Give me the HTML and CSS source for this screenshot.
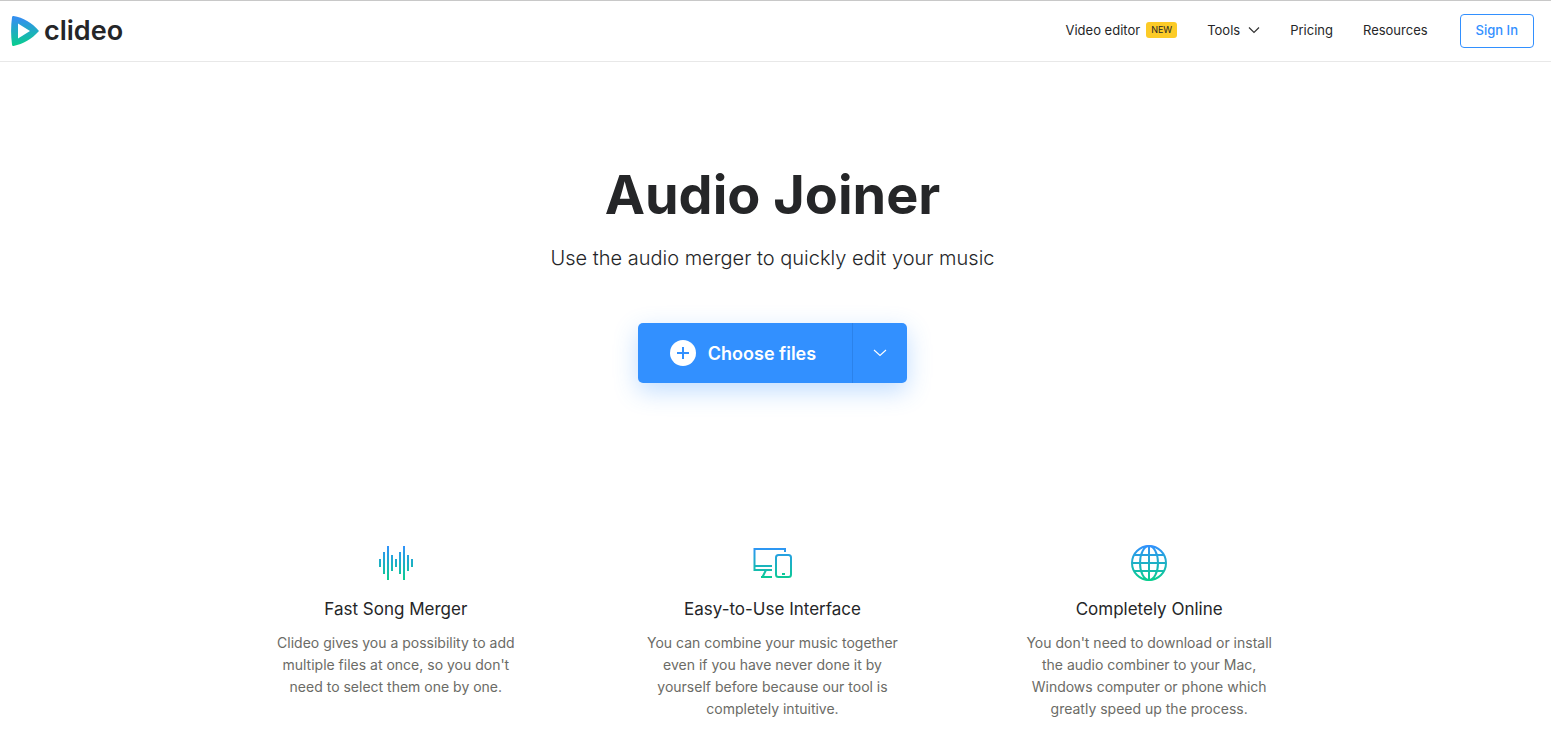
FILE: index.html
```html
<!DOCTYPE html>
<html lang="en">
<head>
  <meta charset="UTF-8" />
  <title>Audio Joiner | Clideo</title>
  <meta name="viewport" content="width=device-width, initial-scale=1.0" />
  <link rel="stylesheet" href="styles.css">
</head>
<body>

  <header class="header">
    <a href="#" class="logo">
      <svg width="30" height="32" viewBox="0 0 30 32" aria-hidden="true">
        <defs>
          <linearGradient id="logo-fill" x1="0" y1="0" x2="0" y2="1">
            <stop offset="0.1" stop-color="#3390ee" />
            <stop offset="1" stop-color="#08cf8c" />
          </linearGradient>
        </defs>
        <path fill="url(#logo-fill)" fill-rule="evenodd" d="M3.6 1C13 2.500 22 7.500 29 16C22 24 13 29 3.600 31C2.600 31 2.200 30.500 2 29.500C.8 20 .8 11 2 2.500C2.200 1.400 2.600 1 3.600 1ZM8 8.500V23.500L20 16Z" />
      </svg>
      <span>clideo</span>
    </a>

    <nav class="nav">
      <a href="#" class="nav-link">Video editor <span class="badge">NEW</span></a>
      <button type="button" class="nav-link">Tools
        <svg width="12" height="8" viewBox="0 0 12 8" aria-hidden="true"><path d="M1 1.500L6 6.500L11 1.500" fill="none" stroke="#333" stroke-width="1.200" /></svg>
      </button>
      <a href="#" class="nav-link">Pricing</a>
      <a href="#" class="nav-link">Resources</a>
      <a href="#" class="sign-in">Sign In</a>
    </nav>
  </header>

  <main class="main">
    <section class="hero">
      <h1>Audio Joiner</h1>
      <p>Use the audio merger to quickly edit your music</p>

      <div class="upload">
        <button type="button" class="choose-btn">
          <svg width="26" height="26" viewBox="0 0 26 26" aria-hidden="true">
            <circle cx="13" cy="13" r="13" fill="#fff" />
            <path d="M13 7v12M7 13h12" stroke="#3290ff" stroke-width="2" />
          </svg>
          Choose files
        </button>
        <button type="button" class="more-btn" aria-label="More sources">
          <svg width="14" height="8" viewBox="0 0 14 8" aria-hidden="true"><path d="M1 1L7 6.500L13 1" fill="none" stroke="#fff" stroke-width="1.100" /></svg>
        </button>
      </div>
    </section>

    <section class="features">
      <article class="feature">
        <svg width="40" height="40" viewBox="0 0 40 40" aria-hidden="true">
          <defs>
            <linearGradient id="icon-stroke" gradientUnits="userSpaceOnUse" x1="0" y1="2" x2="0" y2="38">
              <stop offset="0" stop-color="#3290ff" />
              <stop offset="1" stop-color="#08cf8c" />
            </linearGradient>
          </defs>
          <path fill="url(#icon-stroke)" d="M3 16h2v8H3zM7 9h2v22H7zM11 3h2v34h-2zM15 12h2v16h-2zM19 16h2v8h-2zM23 9h2v22h-2zM27 3h2v34h-2zM31 12h2v16h-2zM35 16h2v8h-2z" />
        </svg>
        <h2>Fast Song Merger</h2>
        <p>Clideo gives you a possibility to add multiple files at once, so you don't need to select them one by one.</p>
      </article>

      <article class="feature">
        <svg width="40" height="40" viewBox="0 0 40 40" aria-hidden="true">
          <g fill="none" stroke="url(#icon-stroke)" stroke-width="2">
            <path d="M33 9V6H2.500V27H20M2.500 23H20M14 27L10.500 34M9 34H20" />
            <rect x="24" y="12" width="15" height="22" rx="2.500" />
          </g>
          <rect x="30" y="30" width="3" height="2" fill="#10c69a" />
        </svg>
        <h2>Easy-to-Use Interface</h2>
        <p>You can combine your music together even if you have never done it by yourself before because our tool is completely intuitive.</p>
      </article>

      <article class="feature">
        <svg width="40" height="40" viewBox="0 0 40 40" aria-hidden="true">
          <g fill="none" stroke="url(#icon-stroke)" stroke-width="2">
            <circle cx="20" cy="20" r="17" />
            <ellipse cx="20" cy="20" rx="9" ry="17" />
            <path d="M20 3V37M5 12H35M3 20H37M5 28H35" />
          </g>
        </svg>
        <h2>Completely Online</h2>
        <p>You don't need to download or install the audio combiner to your Mac, Windows computer or phone which greatly speed up the process.</p>
      </article>
    </section>
  </main>

</body>
</html>
```

FILE: styles.css
```css
/* Reset & base */
* {
  box-sizing: border-box;
}
body {
  margin: 0;
  font-family: Inter, 'Liberation Sans', sans-serif;
  background: #fff;
  color: #252628;
}
h1, h2, p {
  margin: 0;
}
a {
  color: inherit;
  text-decoration: none;
}
button {
  padding: 0;
  border: none;
  background: none;
  color: inherit;
  font-family: inherit;
  cursor: pointer;
}
svg {
  flex-shrink: 0;
}

/* Header */
.header {
  display: flex;
  align-items: center;
  justify-content: space-between;
  height: 62px;
  padding: 0 17px 0 10px;
  border-top: 1px solid #c8c8c8;
  border-bottom: 1px solid #e8e8e8;
}

.logo {
  display: flex;
  align-items: center;
  gap: 4px;
  font-size: 27px;
  font-weight: 600;
  line-height: 30px;
}

.nav {
  display: flex;
  align-items: center;
  gap: 30px;
}

.nav-link {
  display: flex;
  align-items: center;
  gap: 6px;
  padding-bottom: 2px;
  font-size: 13px;
  line-height: 20px;
}
.nav-link svg {
  margin-left: 2px;
}

.badge {
  padding: 0 5px;
  border-radius: 3px;
  background: #fccb27;
  font-size: 9px;
  line-height: 16px;
}

.sign-in {
  margin-left: 2px;
  padding: 0 15px 2px;
  border: 1px solid #3290ff;
  border-radius: 4px;
  color: #3290ff;
  font-size: 13px;
  font-weight: 500;
  line-height: 30px;
}

/* Hero */
.main {
  padding: 98px 6px 12px 0;
}

.hero {
  display: flex;
  flex-direction: column;
  align-items: center;
  text-align: center;
}
.hero h1 {
  font-size: 54px;
  font-weight: 700;
  line-height: 70px;
}
.hero p {
  margin-top: 12px;
  font-size: 20px;
  font-weight: 300;
  line-height: 32px;
}

.upload {
  display: flex;
  height: 60px;
  margin-top: 49px;
  border-radius: 5px;
  background: #3290ff;
  color: #fff;
  box-shadow: 0 8px 24px rgba(50, 144, 255, 0.3);
}

.choose-btn {
  display: flex;
  align-items: center;
  gap: 12px;
  padding: 0 36px 0 32px;
  font-size: 18px;
  font-weight: 600;
}

.more-btn {
  display: flex;
  align-items: center;
  justify-content: center;
  width: 55px;
  border-left: 1px solid #2b82ea;
}

/* Features */
.features {
  display: grid;
  grid-template-columns: repeat(3, 1fr);
  max-width: 1130px;
  margin: 160px auto 0;
}

.feature {
  display: flex;
  flex-direction: column;
  align-items: center;
  padding: 0 60px;
  text-align: center;
}
.feature h2 {
  margin-top: 14px;
  font-size: 17px;
  font-weight: 400;
  line-height: 24px;
}
.feature p {
  max-width: 256px;
  margin-top: 11px;
  color: #6b6b66;
  font-size: 14px;
  line-height: 22px;
}
```
